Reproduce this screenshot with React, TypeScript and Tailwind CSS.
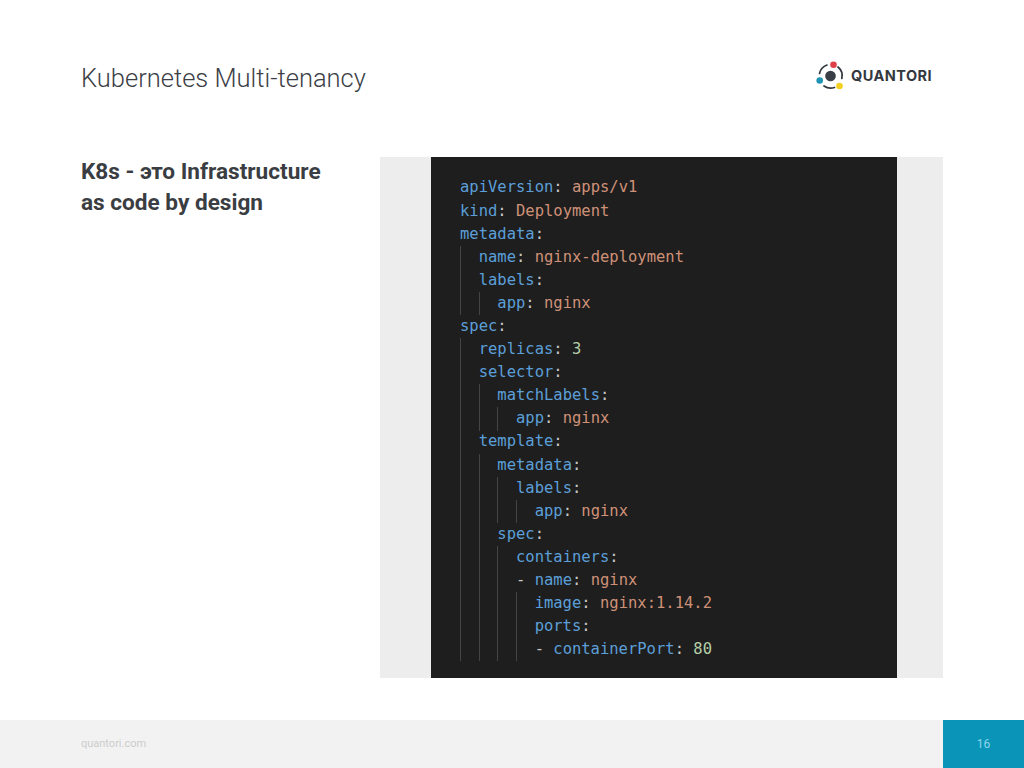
const lines: { guides: number; indent: number; key: string; value?: string; kind?: "string" | "number"; dash?: boolean }[] = [
  { guides: 0, indent: 0, key: "apiVersion", value: "apps/v1" },
  { guides: 0, indent: 0, key: "kind", value: "Deployment" },
  { guides: 0, indent: 0, key: "metadata" },
  { guides: 1, indent: 1, key: "name", value: "nginx-deployment" },
  { guides: 1, indent: 1, key: "labels" },
  { guides: 2, indent: 2, key: "app", value: "nginx" },
  { guides: 0, indent: 0, key: "spec" },
  { guides: 1, indent: 1, key: "replicas", value: "3", kind: "number" },
  { guides: 1, indent: 1, key: "selector" },
  { guides: 2, indent: 2, key: "matchLabels" },
  { guides: 3, indent: 3, key: "app", value: "nginx" },
  { guides: 1, indent: 1, key: "template" },
  { guides: 2, indent: 2, key: "metadata" },
  { guides: 3, indent: 3, key: "labels" },
  { guides: 4, indent: 4, key: "app", value: "nginx" },
  { guides: 2, indent: 2, key: "spec" },
  { guides: 3, indent: 3, key: "containers" },
  { guides: 3, indent: 3, key: "name", value: "nginx", dash: true },
  { guides: 4, indent: 4, key: "image", value: "nginx:1.14.2" },
  { guides: 4, indent: 4, key: "ports" },
  { guides: 4, indent: 4, key: "containerPort", value: "80", kind: "number", dash: true },
];

function CodeLine({ line }: { line: (typeof lines)[number] }) {
  return (
    <div className="flex h-[23.1px] items-center whitespace-pre">
      {Array.from({ length: line.indent }).map((_, i) => (
        <span
          key={i}
          className={`h-full w-[18.66px] shrink-0 border-l ${i < line.guides ? "border-[#444444]" : "border-transparent"}`}
        />
      ))}
      {line.dash && <span className="text-[#c8c8c8]">- </span>}
      <span className="text-[#5c9fd8]">{line.key}</span>
      <span className="text-[#c8c8c8]">:</span>
      {line.value && (
        <span className={line.kind === "number" ? "text-[#b5cea8]" : "text-[#ce9178]"}> {line.value}</span>
      )}
    </div>
  );
}

function QuantoriLogo() {
  return (
    <div className="flex items-center gap-[6px]">
      <svg width="29" height="30" viewBox="0 0 29 30" fill="none">
        <circle cx="14.5" cy="15" r="5.3" fill="#3a3f47" />
        <path d="M3.5 12.5 A11.5 11.5 0 0 1 11 4" stroke="#33383f" strokeWidth="1.7" strokeLinecap="round" />
        <path d="M22 6 A11.5 11.5 0 0 1 25.8 17.5" stroke="#33383f" strokeWidth="1.7" strokeLinecap="round" />
        <path d="M8 25 A11.5 11.5 0 0 0 18.5 26.5" stroke="#33383f" strokeWidth="1.7" strokeLinecap="round" />
        <circle cx="17.5" cy="3.7" r="3.3" fill="#e0404a" />
        <circle cx="3.7" cy="19.5" r="3.3" fill="#1f94b4" />
        <circle cx="23.5" cy="25" r="3.3" fill="#f3d01f" />
      </svg>
      <span className="font-['Inter',sans-serif] text-[14.5px] leading-none font-bold tracking-[0.45px] text-[#33383f]">QUANTORI</span>
    </div>
  );
}

export default function App() {
  return (
    <div className="flex h-[768px] w-[1024px] flex-col bg-white font-['Roboto',sans-serif]">
      <header className="flex h-[157px] shrink-0 items-start justify-between pr-[92px] pl-[81px]">
        <h1 className="mt-[62px] text-[25.5px] leading-[32px] font-light text-[#3c4046]">Kubernetes Multi-tenancy</h1>
        <div className="mt-[61px]">
          <QuantoriLogo />
        </div>
      </header>

      <main className="flex h-[521px] shrink-0 pr-[81px] pl-[81px]">
        <h2 className="-mt-px w-[299px] shrink-0 text-[22.6px] leading-[31px] font-bold text-[#3a3d42]">
          K8s - это Infrastructure
          <br />
          as code by design
        </h2>
        <div className="flex w-[563px] shrink-0 justify-center bg-[#ededed] pr-[46px] pl-[51px]">
          <div className="w-[466px] bg-[#1e1e1e] pt-[19.5px] pl-[29px] font-['DejaVu_Sans_Mono',monospace] text-[15.5px]">
            {lines.map((line, i) => (
              <CodeLine key={i} line={line} />
            ))}
          </div>
        </div>
      </main>

      <footer className="mt-auto flex h-[48px] shrink-0 bg-[#f2f2f2]">
        <div className="flex flex-1 items-center pl-[81px] text-[11px] text-[#cccccc]">quantori.com</div>
        <div className="flex w-[81px] items-center justify-center bg-[#0a94b8] text-[12px] text-[#8fd6ea]">16</div>
      </footer>
    </div>
  );
}
